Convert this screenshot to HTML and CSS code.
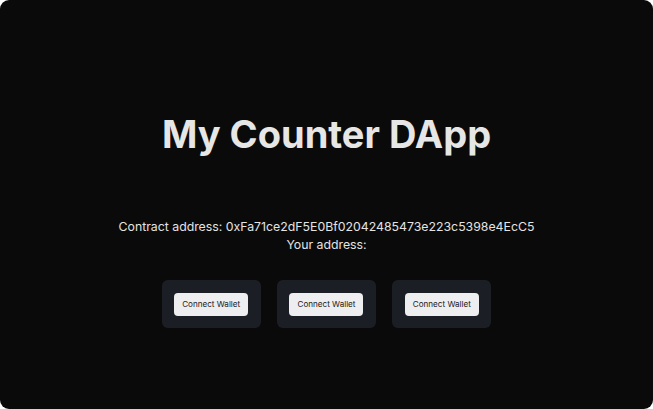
FILE: index.html
```html
<!DOCTYPE html>
<html>
<head>
<meta charset="utf-8">
<link rel="stylesheet" href="styles.css">
</head>
<body>
<div class="app">
  <h1 class="title">My Counter DApp</h1>
  <div class="info">
    <p>Contract address: 0xFa71ce2dF5E0Bf02042485473e223c5398e4EcC5</p>
    <p>Your address:</p>
  </div>
  <div class="cards">
    <div class="card"><button class="btn">Connect Wallet</button></div>
    <div class="card"><button class="btn">Connect Wallet</button></div>
    <div class="card"><button class="btn">Connect Wallet</button></div>
  </div>
</div>
</body>
</html>
```
FILE: styles.css
```css
html, body {
  margin: 0;
  padding: 0;
  background: #ffffff;
}
.app {
  width: 653px;
  height: 409px;
  box-sizing: border-box;
  background: #0a0a0a;
  border-radius: 9px;
  font-family: Inter, "Liberation Sans", sans-serif;
  color: #e8e8e8;
  display: flex;
  flex-direction: column;
  align-items: center;
  padding-top: 110px;
}
.title {
  margin: 0;
  font-size: 38px;
  font-weight: 700;
  line-height: 48px;
  color: #e6e6e6;
  letter-spacing: 0;
}
.info {
  margin-top: 60px;
  text-align: center;
  font-size: 12.3px;
  line-height: 18px;
  color: #e4e4e4;
}
.info p {
  margin: 0;
}
.cards {
  margin-top: 26px;
  display: flex;
  gap: 16px;
}
.card {
  width: 99.3px;
  height: 48px;
  box-sizing: border-box;
  background: #1b1f25;
  border-radius: 6px;
  display: flex;
  align-items: center;
  justify-content: center;
}
.btn {
  width: 74px;
  height: 23px;
  border: none;
  border-radius: 4px;
  background: #eeeef0;
  color: #1a1a1a;
  font-family: Inter, "Liberation Sans", sans-serif;
  font-size: 8.1px;
  padding: 0;
  cursor: pointer;
}
```
